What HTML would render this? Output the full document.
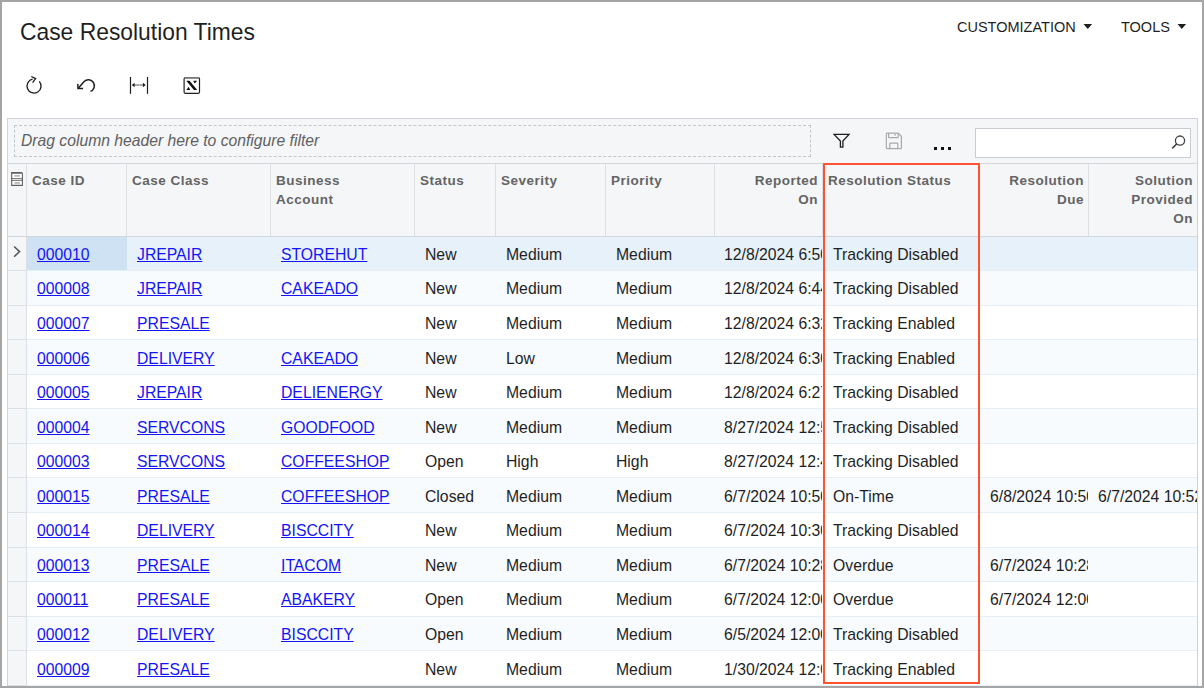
<!DOCTYPE html>
<html><head><meta charset="utf-8"><title>Case Resolution Times</title>
<style>
*{box-sizing:border-box;margin:0;padding:0}
html,body{width:1204px;height:688px;overflow:hidden;background:#a5a5a5}
body{position:relative;font-family:"Liberation Sans",sans-serif;color:#1f1f1f}
.abs{position:absolute}
#page{position:absolute;left:2px;top:2px;width:1200px;height:684px;background:#fff;overflow:hidden}
.t{position:absolute;white-space:nowrap;line-height:20px}
.hd{position:absolute;white-space:nowrap;font-weight:bold;font-size:13.5px;letter-spacing:0.5px;line-height:19px;color:#646464}
.cell{position:absolute;white-space:nowrap;overflow:hidden;font-size:15.75px;line-height:20px;color:#1f1f1f}
.cell a{color:#1414f5;text-decoration:underline;text-underline-offset:1px}
</style></head><body>
<div id="page"></div>

<div class="t" style="left:20px;top:17.78px;line-height:28px;font-size:22.85px;color:#1f1f1f;transform:scaleY(1.08);transform-origin:0 21.92px">Case Resolution Times</div>
<div class="t" style="left:957px;top:16.78px;font-size:14.5px;color:#1f1f1f">CUSTOMIZATION</div>
<svg class="abs" style="left:1083px;top:23px" width="10" height="7"><path d="M0.5 1.1 L9.1 1.1 L4.8 5.9 Z" fill="#1f1f1f"/></svg>
<div class="t" style="left:1121px;top:16.78px;font-size:14.5px;color:#1f1f1f">TOOLS</div>
<svg class="abs" style="left:1177px;top:23px" width="10" height="7"><path d="M0.5 1.1 L9.1 1.1 L4.8 5.9 Z" fill="#1f1f1f"/></svg>
<svg class="abs" style="left:20px;top:70px" width="30" height="30" viewBox="0 0 30 30" fill="none" stroke="#1f1f1f" stroke-width="1.35">
<path d="M19.3 11.4 A7 7 0 1 1 12.6 9.2"/><path d="M11.3 6.5 L15.6 8.6 L12.6 12.6" stroke-linejoin="miter"/></svg>
<svg class="abs" style="left:70px;top:70px" width="30" height="30" viewBox="0 0 30 30" fill="none" stroke="#1f1f1f" stroke-width="1.5">
<path d="M20.45 21.35 A6 6 0 1 0 14.15 11.45 L8.5 18.0"/><path d="M7.8 13.9 L8.0 18.6 L13.1 18.6"/></svg>
<svg class="abs" style="left:123px;top:70px" width="30" height="30" viewBox="0 0 30 30">
<rect x="6.9" y="7" width="1.2" height="16.8" fill="#1f1f1f"/><rect x="23.9" y="7" width="1.2" height="16.8" fill="#1f1f1f"/>
<rect x="10" y="14.4" width="10.5" height="1.2" fill="#777"/><path d="M8.8 15 L11.6 12.8 L11.6 17.2Z M22.7 15 L19.9 12.8 L19.9 17.2Z" fill="#1f1f1f"/></svg>
<svg class="abs" style="left:177px;top:70px" width="30" height="30" viewBox="0 0 30 30">
<rect x="7.1" y="7.6" width="15.4" height="15.8" rx="1.5" fill="#fff" stroke="#1f1f1f" stroke-width="1.2"/>
<rect x="7.6" y="7.2" width="14.4" height="1.6" fill="#888"/>
<path d="M9.3 10.7 L12.6 10.7 L20.2 20 L16.9 20 Z" fill="#111"/><path d="M16.2 10.7 L20.2 10.7 L17.7 13.6 Z M9.3 20 L13.2 20 L11.7 16.8 Z" fill="#111"/></svg>
<div class="abs" style="left:7px;top:118px;width:1191px;height:600px;background:#f5f6f8;border:1px solid #cfd2d6"></div>
<div class="abs" style="left:14px;top:125px;width:797px;height:32px;border:1px dashed #c3c6ca"></div>
<div class="t" style="left:21px;top:131.16px;font-size:15.7px;font-style:italic;color:#606060">Drag column header here to configure filter</div>
<svg class="abs" style="left:826px;top:126px" width="30" height="30" viewBox="0 0 30 30" fill="none" stroke="#1f1f1f" stroke-width="1.3" stroke-linejoin="miter">
<path d="M8.1 8.4 L23.0 8.4 L16.9 15.0 L16.9 21.2 L14.4 21.2 L14.4 15.0 Z"/></svg>
<svg class="abs" style="left:879px;top:126px" width="30" height="30" viewBox="0 0 30 30" fill="none" stroke="#a9a9a9" stroke-width="1.2">
<path d="M8.2 7.1 L19.2 7.1 L22.4 10.3 L22.4 21.7 Q22.4 22.6 21.5 22.6 L8.2 22.6 Q7.3 22.6 7.3 21.7 L7.3 8 Q7.3 7.1 8.2 7.1Z"/>
<path d="M9.6 7.1 L9.6 11 Q9.6 11.6 10.2 11.6 L18.6 11.6 Q19.2 11.6 19.2 11 L19.2 7.1"/>
<path d="M10.8 22.6 L10.8 17.8 Q10.8 17.2 11.4 17.2 L18.2 17.2 Q18.8 17.2 18.8 17.8 L18.8 22.6"/>
<path d="M16.1 8 L16.1 9.6" stroke-width="1.4"/></svg>
<div class="abs" style="left:933.5px;top:147px;width:3.5px;height:3px;background:#111"></div>
<div class="abs" style="left:940.5px;top:147px;width:3.5px;height:3px;background:#111"></div>
<div class="abs" style="left:947.5px;top:147px;width:3.5px;height:3px;background:#111"></div>
<div class="abs" style="left:975px;top:128px;width:216px;height:30px;background:#fff;border:1px solid #c9ccd0"></div>
<svg class="abs" style="left:1165px;top:126px" width="30" height="30" viewBox="0 0 30 30" fill="none" stroke="#444" stroke-width="1.3">
<circle cx="15" cy="14.6" r="4.6"/><path d="M11.7 17.9 L7.2 22.4" stroke-width="1.5"/></svg>
<div class="abs" style="left:7px;top:163px;width:1191px;height:1px;background:#d3d6da"></div>
<div class="abs" style="left:7px;top:236px;width:1191px;height:1px;background:#d3d6da"></div>
<div class="abs" style="left:26px;top:164px;width:1px;height:72px;background:#dcdfe3"></div>
<div class="abs" style="left:126px;top:164px;width:1px;height:72px;background:#dcdfe3"></div>
<div class="abs" style="left:270px;top:164px;width:1px;height:72px;background:#dcdfe3"></div>
<div class="abs" style="left:414px;top:164px;width:1px;height:72px;background:#dcdfe3"></div>
<div class="abs" style="left:495px;top:164px;width:1px;height:72px;background:#dcdfe3"></div>
<div class="abs" style="left:605px;top:164px;width:1px;height:72px;background:#dcdfe3"></div>
<div class="abs" style="left:714px;top:164px;width:1px;height:72px;background:#dcdfe3"></div>
<div class="abs" style="left:822px;top:164px;width:1px;height:72px;background:#dcdfe3"></div>
<div class="abs" style="left:979px;top:164px;width:1px;height:72px;background:#dcdfe3"></div>
<div class="abs" style="left:1088px;top:164px;width:1px;height:72px;background:#dcdfe3"></div>
<svg class="abs" style="left:5px;top:163px" width="25" height="30" viewBox="0 0 25 30">
<path d="M6.7 9.6 L16.6 9.6 L17.4 10.4 L17.4 22.4 L6.7 22.4 Z" fill="#fff" stroke="#616161" stroke-width="1.1"/>
<rect x="6.2" y="9" width="10.4" height="1.7" fill="#616161"/>
<rect x="6.2" y="15.2" width="11.7" height="0.9" fill="#616161"/>
<rect x="6.2" y="16.9" width="11.7" height="0.9" fill="#616161"/>
<rect x="9.4" y="12.1" width="5.6" height="1.6" fill="#b4b4b4"/><rect x="9.4" y="19.2" width="5.6" height="1.6" fill="#b4b4b4"/></svg>
<div class="hd" style="left:32px;top:170.82px">Case ID</div>
<div class="hd" style="left:132px;top:170.82px">Case Class</div>
<div class="hd" style="left:276px;top:170.82px">Business</div>
<div class="hd" style="left:276px;top:189.82px">Account</div>
<div class="hd" style="left:420px;top:170.82px">Status</div>
<div class="hd" style="left:501px;top:170.82px">Severity</div>
<div class="hd" style="left:611px;top:170.82px">Priority</div>
<div class="hd" style="right:386px;top:170.82px;text-align:right">Reported</div>
<div class="hd" style="right:386px;top:189.82px;text-align:right">On</div>
<div class="hd" style="left:828px;top:170.82px">Resolution Status</div>
<div class="hd" style="right:120px;top:170.82px;text-align:right">Resolution</div>
<div class="hd" style="right:120px;top:189.82px;text-align:right">Due</div>
<div class="hd" style="right:11px;top:170.82px;text-align:right">Solution</div>
<div class="hd" style="right:11px;top:189.82px;text-align:right">Provided</div>
<div class="hd" style="right:11px;top:208.82px;text-align:right">On</div>
<div class="abs" style="left:27px;top:237px;width:1170px;height:33px;background:#e6f1fa"></div>
<div class="abs" style="left:8px;top:237px;width:18px;height:34px;background:#f5f6f8"></div>
<div class="abs" style="left:27px;top:270px;width:1170px;height:1px;background:#e5eff8"></div>
<div class="abs" style="left:8px;top:270px;width:18px;height:1px;background:#dcdfe3"></div>
<div class="abs" style="left:27px;top:237px;width:100px;height:33px;background:#cfe2f3"></div>
<svg class="abs" style="left:5px;top:240px" width="25" height="25" viewBox="0 0 25 25" fill="none" stroke="#555" stroke-width="1.5"><path d="M9.1 6.5 L14.6 11.6 L9.1 16.7"/></svg>
<div class="cell" style="left:27px;top:244.54px;width:99px;padding-left:10px"><a>000010</a></div>
<div class="cell" style="left:127px;top:244.54px;width:143px;padding-left:10px"><a>JREPAIR</a></div>
<div class="cell" style="left:271px;top:244.54px;width:143px;padding-left:10px"><a>STOREHUT</a></div>
<div class="cell" style="left:415px;top:244.54px;width:80px;padding-left:10px">New</div>
<div class="cell" style="left:496px;top:244.54px;width:109px;padding-left:10px">Medium</div>
<div class="cell" style="left:606px;top:244.54px;width:108px;padding-left:10px">Medium</div>
<div class="cell" style="left:715px;top:244.54px;width:107px;padding-left:9px">12/8/2024 6:50 AM</div>
<div class="cell" style="left:823px;top:244.54px;width:156px;padding-left:10px">Tracking Disabled</div>
<div class="abs" style="left:27px;top:271px;width:1170px;height:34px;background:#f7fbfe"></div>
<div class="abs" style="left:8px;top:271px;width:18px;height:35px;background:#f5f6f8"></div>
<div class="abs" style="left:27px;top:305px;width:1170px;height:1px;background:#e5eff8"></div>
<div class="abs" style="left:8px;top:305px;width:18px;height:1px;background:#dcdfe3"></div>
<div class="cell" style="left:27px;top:278.54px;width:99px;padding-left:10px"><a>000008</a></div>
<div class="cell" style="left:127px;top:278.54px;width:143px;padding-left:10px"><a>JREPAIR</a></div>
<div class="cell" style="left:271px;top:278.54px;width:143px;padding-left:10px"><a>CAKEADO</a></div>
<div class="cell" style="left:415px;top:278.54px;width:80px;padding-left:10px">New</div>
<div class="cell" style="left:496px;top:278.54px;width:109px;padding-left:10px">Medium</div>
<div class="cell" style="left:606px;top:278.54px;width:108px;padding-left:10px">Medium</div>
<div class="cell" style="left:715px;top:278.54px;width:107px;padding-left:9px">12/8/2024 6:44 AM</div>
<div class="cell" style="left:823px;top:278.54px;width:156px;padding-left:10px">Tracking Disabled</div>
<div class="abs" style="left:27px;top:306px;width:1170px;height:33px;background:#ffffff"></div>
<div class="abs" style="left:8px;top:306px;width:18px;height:34px;background:#f5f6f8"></div>
<div class="abs" style="left:27px;top:339px;width:1170px;height:1px;background:#e5eff8"></div>
<div class="abs" style="left:8px;top:339px;width:18px;height:1px;background:#dcdfe3"></div>
<div class="cell" style="left:27px;top:313.54px;width:99px;padding-left:10px"><a>000007</a></div>
<div class="cell" style="left:127px;top:313.54px;width:143px;padding-left:10px"><a>PRESALE</a></div>
<div class="cell" style="left:415px;top:313.54px;width:80px;padding-left:10px">New</div>
<div class="cell" style="left:496px;top:313.54px;width:109px;padding-left:10px">Medium</div>
<div class="cell" style="left:606px;top:313.54px;width:108px;padding-left:10px">Medium</div>
<div class="cell" style="left:715px;top:313.54px;width:107px;padding-left:9px">12/8/2024 6:32 AM</div>
<div class="cell" style="left:823px;top:313.54px;width:156px;padding-left:10px">Tracking Enabled</div>
<div class="abs" style="left:27px;top:340px;width:1170px;height:34px;background:#f7fbfe"></div>
<div class="abs" style="left:8px;top:340px;width:18px;height:35px;background:#f5f6f8"></div>
<div class="abs" style="left:27px;top:374px;width:1170px;height:1px;background:#e5eff8"></div>
<div class="abs" style="left:8px;top:374px;width:18px;height:1px;background:#dcdfe3"></div>
<div class="cell" style="left:27px;top:348.54px;width:99px;padding-left:10px"><a>000006</a></div>
<div class="cell" style="left:127px;top:348.54px;width:143px;padding-left:10px"><a>DELIVERY</a></div>
<div class="cell" style="left:271px;top:348.54px;width:143px;padding-left:10px"><a>CAKEADO</a></div>
<div class="cell" style="left:415px;top:348.54px;width:80px;padding-left:10px">New</div>
<div class="cell" style="left:496px;top:348.54px;width:109px;padding-left:10px">Low</div>
<div class="cell" style="left:606px;top:348.54px;width:108px;padding-left:10px">Medium</div>
<div class="cell" style="left:715px;top:348.54px;width:107px;padding-left:9px">12/8/2024 6:30 AM</div>
<div class="cell" style="left:823px;top:348.54px;width:156px;padding-left:10px">Tracking Enabled</div>
<div class="abs" style="left:27px;top:375px;width:1170px;height:33px;background:#ffffff"></div>
<div class="abs" style="left:8px;top:375px;width:18px;height:34px;background:#f5f6f8"></div>
<div class="abs" style="left:27px;top:408px;width:1170px;height:1px;background:#e5eff8"></div>
<div class="abs" style="left:8px;top:408px;width:18px;height:1px;background:#dcdfe3"></div>
<div class="cell" style="left:27px;top:382.54px;width:99px;padding-left:10px"><a>000005</a></div>
<div class="cell" style="left:127px;top:382.54px;width:143px;padding-left:10px"><a>JREPAIR</a></div>
<div class="cell" style="left:271px;top:382.54px;width:143px;padding-left:10px"><a>DELIENERGY</a></div>
<div class="cell" style="left:415px;top:382.54px;width:80px;padding-left:10px">New</div>
<div class="cell" style="left:496px;top:382.54px;width:109px;padding-left:10px">Medium</div>
<div class="cell" style="left:606px;top:382.54px;width:108px;padding-left:10px">Medium</div>
<div class="cell" style="left:715px;top:382.54px;width:107px;padding-left:9px">12/8/2024 6:27 AM</div>
<div class="cell" style="left:823px;top:382.54px;width:156px;padding-left:10px">Tracking Disabled</div>
<div class="abs" style="left:27px;top:409px;width:1170px;height:34px;background:#f7fbfe"></div>
<div class="abs" style="left:8px;top:409px;width:18px;height:35px;background:#f5f6f8"></div>
<div class="abs" style="left:27px;top:443px;width:1170px;height:1px;background:#e5eff8"></div>
<div class="abs" style="left:8px;top:443px;width:18px;height:1px;background:#dcdfe3"></div>
<div class="cell" style="left:27px;top:417.54px;width:99px;padding-left:10px"><a>000004</a></div>
<div class="cell" style="left:127px;top:417.54px;width:143px;padding-left:10px"><a>SERVCONS</a></div>
<div class="cell" style="left:271px;top:417.54px;width:143px;padding-left:10px"><a>GOODFOOD</a></div>
<div class="cell" style="left:415px;top:417.54px;width:80px;padding-left:10px">New</div>
<div class="cell" style="left:496px;top:417.54px;width:109px;padding-left:10px">Medium</div>
<div class="cell" style="left:606px;top:417.54px;width:108px;padding-left:10px">Medium</div>
<div class="cell" style="left:715px;top:417.54px;width:107px;padding-left:9px">8/27/2024 12:53 PM</div>
<div class="cell" style="left:823px;top:417.54px;width:156px;padding-left:10px">Tracking Disabled</div>
<div class="abs" style="left:27px;top:444px;width:1170px;height:33px;background:#ffffff"></div>
<div class="abs" style="left:8px;top:444px;width:18px;height:34px;background:#f5f6f8"></div>
<div class="abs" style="left:27px;top:477px;width:1170px;height:1px;background:#e5eff8"></div>
<div class="abs" style="left:8px;top:477px;width:18px;height:1px;background:#dcdfe3"></div>
<div class="cell" style="left:27px;top:451.54px;width:99px;padding-left:10px"><a>000003</a></div>
<div class="cell" style="left:127px;top:451.54px;width:143px;padding-left:10px"><a>SERVCONS</a></div>
<div class="cell" style="left:271px;top:451.54px;width:143px;padding-left:10px"><a>COFFEESHOP</a></div>
<div class="cell" style="left:415px;top:451.54px;width:80px;padding-left:10px">Open</div>
<div class="cell" style="left:496px;top:451.54px;width:109px;padding-left:10px">High</div>
<div class="cell" style="left:606px;top:451.54px;width:108px;padding-left:10px">High</div>
<div class="cell" style="left:715px;top:451.54px;width:107px;padding-left:9px">8/27/2024 12:47 PM</div>
<div class="cell" style="left:823px;top:451.54px;width:156px;padding-left:10px">Tracking Disabled</div>
<div class="abs" style="left:27px;top:478px;width:1170px;height:34px;background:#f7fbfe"></div>
<div class="abs" style="left:8px;top:478px;width:18px;height:35px;background:#f5f6f8"></div>
<div class="abs" style="left:27px;top:512px;width:1170px;height:1px;background:#e5eff8"></div>
<div class="abs" style="left:8px;top:512px;width:18px;height:1px;background:#dcdfe3"></div>
<div class="cell" style="left:27px;top:486.54px;width:99px;padding-left:10px"><a>000015</a></div>
<div class="cell" style="left:127px;top:486.54px;width:143px;padding-left:10px"><a>PRESALE</a></div>
<div class="cell" style="left:271px;top:486.54px;width:143px;padding-left:10px"><a>COFFEESHOP</a></div>
<div class="cell" style="left:415px;top:486.54px;width:80px;padding-left:10px">Closed</div>
<div class="cell" style="left:496px;top:486.54px;width:109px;padding-left:10px">Medium</div>
<div class="cell" style="left:606px;top:486.54px;width:108px;padding-left:10px">Medium</div>
<div class="cell" style="left:715px;top:486.54px;width:107px;padding-left:9px">6/7/2024 10:50 AM</div>
<div class="cell" style="left:823px;top:486.54px;width:156px;padding-left:10px">On-Time</div>
<div class="cell" style="left:980px;top:486.54px;width:108px;padding-left:10px">6/8/2024 10:50 AM</div>
<div class="cell" style="left:1089px;top:486.54px;width:108px;padding-left:9px">6/7/2024 10:52 AM</div>
<div class="abs" style="left:27px;top:513px;width:1170px;height:34px;background:#ffffff"></div>
<div class="abs" style="left:8px;top:513px;width:18px;height:35px;background:#f5f6f8"></div>
<div class="abs" style="left:27px;top:547px;width:1170px;height:1px;background:#e5eff8"></div>
<div class="abs" style="left:8px;top:547px;width:18px;height:1px;background:#dcdfe3"></div>
<div class="cell" style="left:27px;top:520.54px;width:99px;padding-left:10px"><a>000014</a></div>
<div class="cell" style="left:127px;top:520.54px;width:143px;padding-left:10px"><a>DELIVERY</a></div>
<div class="cell" style="left:271px;top:520.54px;width:143px;padding-left:10px"><a>BISCCITY</a></div>
<div class="cell" style="left:415px;top:520.54px;width:80px;padding-left:10px">New</div>
<div class="cell" style="left:496px;top:520.54px;width:109px;padding-left:10px">Medium</div>
<div class="cell" style="left:606px;top:520.54px;width:108px;padding-left:10px">Medium</div>
<div class="cell" style="left:715px;top:520.54px;width:107px;padding-left:9px">6/7/2024 10:30 AM</div>
<div class="cell" style="left:823px;top:520.54px;width:156px;padding-left:10px">Tracking Disabled</div>
<div class="abs" style="left:27px;top:548px;width:1170px;height:33px;background:#f7fbfe"></div>
<div class="abs" style="left:8px;top:548px;width:18px;height:34px;background:#f5f6f8"></div>
<div class="abs" style="left:27px;top:581px;width:1170px;height:1px;background:#e5eff8"></div>
<div class="abs" style="left:8px;top:581px;width:18px;height:1px;background:#dcdfe3"></div>
<div class="cell" style="left:27px;top:555.54px;width:99px;padding-left:10px"><a>000013</a></div>
<div class="cell" style="left:127px;top:555.54px;width:143px;padding-left:10px"><a>PRESALE</a></div>
<div class="cell" style="left:271px;top:555.54px;width:143px;padding-left:10px"><a>ITACOM</a></div>
<div class="cell" style="left:415px;top:555.54px;width:80px;padding-left:10px">New</div>
<div class="cell" style="left:496px;top:555.54px;width:109px;padding-left:10px">Medium</div>
<div class="cell" style="left:606px;top:555.54px;width:108px;padding-left:10px">Medium</div>
<div class="cell" style="left:715px;top:555.54px;width:107px;padding-left:9px">6/7/2024 10:28 AM</div>
<div class="cell" style="left:823px;top:555.54px;width:156px;padding-left:10px">Overdue</div>
<div class="cell" style="left:980px;top:555.54px;width:108px;padding-left:10px">6/7/2024 10:28 AM</div>
<div class="abs" style="left:27px;top:582px;width:1170px;height:34px;background:#ffffff"></div>
<div class="abs" style="left:8px;top:582px;width:18px;height:35px;background:#f5f6f8"></div>
<div class="abs" style="left:27px;top:616px;width:1170px;height:1px;background:#e5eff8"></div>
<div class="abs" style="left:8px;top:616px;width:18px;height:1px;background:#dcdfe3"></div>
<div class="cell" style="left:27px;top:589.54px;width:99px;padding-left:10px"><a>000011</a></div>
<div class="cell" style="left:127px;top:589.54px;width:143px;padding-left:10px"><a>PRESALE</a></div>
<div class="cell" style="left:271px;top:589.54px;width:143px;padding-left:10px"><a>ABAKERY</a></div>
<div class="cell" style="left:415px;top:589.54px;width:80px;padding-left:10px">Open</div>
<div class="cell" style="left:496px;top:589.54px;width:109px;padding-left:10px">Medium</div>
<div class="cell" style="left:606px;top:589.54px;width:108px;padding-left:10px">Medium</div>
<div class="cell" style="left:715px;top:589.54px;width:107px;padding-left:9px">6/7/2024 12:00 PM</div>
<div class="cell" style="left:823px;top:589.54px;width:156px;padding-left:10px">Overdue</div>
<div class="cell" style="left:980px;top:589.54px;width:108px;padding-left:10px">6/7/2024 12:00 PM</div>
<div class="abs" style="left:27px;top:617px;width:1170px;height:33px;background:#f7fbfe"></div>
<div class="abs" style="left:8px;top:617px;width:18px;height:34px;background:#f5f6f8"></div>
<div class="abs" style="left:27px;top:650px;width:1170px;height:1px;background:#e5eff8"></div>
<div class="abs" style="left:8px;top:650px;width:18px;height:1px;background:#dcdfe3"></div>
<div class="cell" style="left:27px;top:624.54px;width:99px;padding-left:10px"><a>000012</a></div>
<div class="cell" style="left:127px;top:624.54px;width:143px;padding-left:10px"><a>DELIVERY</a></div>
<div class="cell" style="left:271px;top:624.54px;width:143px;padding-left:10px"><a>BISCCITY</a></div>
<div class="cell" style="left:415px;top:624.54px;width:80px;padding-left:10px">Open</div>
<div class="cell" style="left:496px;top:624.54px;width:109px;padding-left:10px">Medium</div>
<div class="cell" style="left:606px;top:624.54px;width:108px;padding-left:10px">Medium</div>
<div class="cell" style="left:715px;top:624.54px;width:107px;padding-left:9px">6/5/2024 12:00 PM</div>
<div class="cell" style="left:823px;top:624.54px;width:156px;padding-left:10px">Tracking Disabled</div>
<div class="abs" style="left:27px;top:651px;width:1170px;height:34px;background:#ffffff"></div>
<div class="abs" style="left:8px;top:651px;width:18px;height:35px;background:#f5f6f8"></div>
<div class="abs" style="left:27px;top:685px;width:1170px;height:1px;background:#e5eff8"></div>
<div class="abs" style="left:8px;top:685px;width:18px;height:1px;background:#dcdfe3"></div>
<div class="cell" style="left:27px;top:659.54px;width:99px;padding-left:10px"><a>000009</a></div>
<div class="cell" style="left:127px;top:659.54px;width:143px;padding-left:10px"><a>PRESALE</a></div>
<div class="cell" style="left:415px;top:659.54px;width:80px;padding-left:10px">New</div>
<div class="cell" style="left:496px;top:659.54px;width:109px;padding-left:10px">Medium</div>
<div class="cell" style="left:606px;top:659.54px;width:108px;padding-left:10px">Medium</div>
<div class="cell" style="left:715px;top:659.54px;width:107px;padding-left:9px">1/30/2024 12:00 PM</div>
<div class="cell" style="left:823px;top:659.54px;width:156px;padding-left:10px">Tracking Enabled</div>
<div class="abs" style="left:26px;top:237px;width:1px;height:460px;background:#dcdfe3"></div>
<div class="abs" style="left:823px;top:163px;width:157px;height:521px;border:2px solid #ff5230"></div>
<div class="abs" style="left:0;top:0;width:1204px;height:688px;border:2px solid #a5a5a5"></div>
</body></html>
